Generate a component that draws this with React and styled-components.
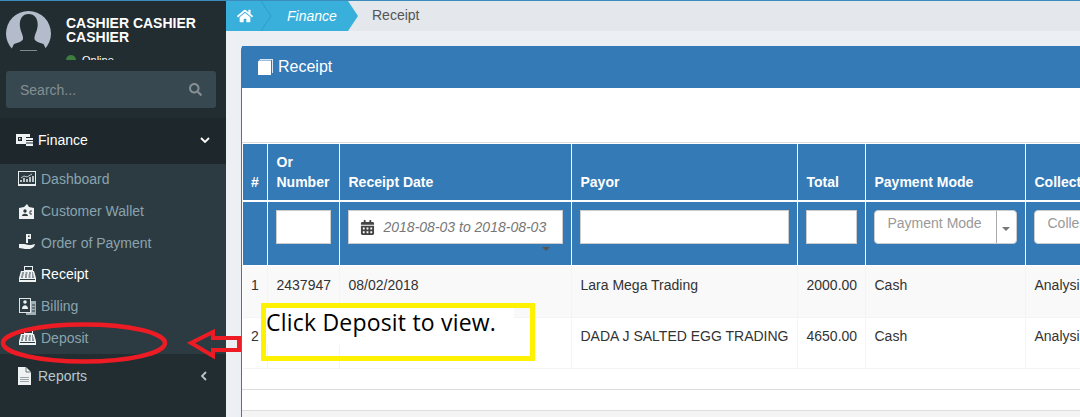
import React from 'react'
import styled, { createGlobalStyle } from 'styled-components'
import { FaHome, FaSearch, FaCalendarAlt } from 'react-icons/fa'

const GlobalStyle = createGlobalStyle`
    html, body {
        margin: 0;
        padding: 0;
        height: 417px;
        overflow: hidden;
        background: #ecf0f5;
        font-family: "Liberation Sans", Arial, sans-serif;
        font-size: 14px;
    }
    * { box-sizing: border-box; }
`

const DashboardIcon = () => (
    <svg width="18" height="16" viewBox="0 0 18 16" fill="none">
        <rect x="0.500" y="0.500" width="17" height="13" stroke="#e8eef0" />
        <rect y="13" width="18" height="2" fill="#e8eef0" />
        <path d="M3 11V9M6 11V7M9 11V8M12 11V6M15 11V5" stroke="#e8eef0" strokeWidth="1.500" />
        <path d="M3 7l3-2 3 1 5-3" stroke="#e8eef0" strokeWidth="0.800" />
    </svg>
)

const WalletIcon = () => (
    <svg width="18" height="16" viewBox="0 0 18 16">
        <path d="M1 5l5-1 3-3 2 3 5 1v11H1z" fill="#eef2f3" />
        <circle cx="7" cy="8" r="1.700" fill="#2c3b41" />
        <path d="M4 13c0-3 6-3 6 0z" fill="#2c3b41" />
        <path d="M14 8h-2v3h2" fill="none" stroke="#2c3b41" />
    </svg>
)

const PaymentIcon = () => (
    <svg width="18" height="17" viewBox="0 0 18 17">
        <path d="M8 0h5v5h-3v4H8z" fill="#eef2f3" />
        <rect x="10" y="1.500" width="1.500" height="1.500" fill="#2c3b41" />
        <path d="M1 10h5c2 0 3 1 5 1h2l4-1c0 2-2 4-5 5H7c-2 0-3-1-6-1z" fill="#eef2f3" />
    </svg>
)

const RegisterIcon = () => (
    <svg width="18" height="17" viewBox="0 0 18 17">
        <rect x="6.500" y="0.500" width="8" height="4" fill="none" stroke="#eef2f3" />
        <path d="M3 5h13l2 7v4H1v-4z" fill="#eef2f3" />
        <path d="M4 7h2M7.500 7h2M11 7h2M14 7h1M3.500 9h2M7 9h2M10.500 9h2M14 9h1.500M3 11h2M7 11h2M10.500 11h2M14 11h2M2 13.500h15" stroke="#2c3b41" />
    </svg>
)

const BillingIcon = () => (
    <svg width="18" height="17" viewBox="0 0 18 17">
        <rect x="8" y="3" width="10" height="14" fill="#9fb0b6" />
        <rect x="1.500" y="0.500" width="11" height="14" fill="#2c3b41" stroke="#dfe5e7" />
        <circle cx="7" cy="4" r="1.800" fill="#eef2f3" />
        <path d="M4 11c0-5 6-5 6 0z" fill="#eef2f3" />
        <path d="M14 7h3M14 10h3M14 13h3" stroke="#2c3b41" />
    </svg>
)

const FinanceIcon = () => (
    <svg width="17" height="12" viewBox="0 0 17 12">
        <path d="M0 0h14v3H10v7H0z" fill="#eef2f3" />
        <rect x="2" y="3" width="4" height="4" fill="#1e282c" />
        <rect x="3" y="4" width="1.500" height="1.500" fill="#eef2f3" />
        <path d="M10 4h7v8h-7z" fill="#eef2f3" />
        <path d="M10 6.500h7M10 9h7" stroke="#1e282c" />
    </svg>
)

const ReportsIcon = () => (
    <svg width="13" height="18" viewBox="0 0 13 18">
        <path d="M0 0h8l5 5v13H0z" fill="#eef2f3" />
        <path d="M8 0v5h5" fill="none" stroke="#222d32" strokeWidth="0.600" />
        <path d="M2 10.500h9M2 12.500h9M2 14.500h9" stroke="#9aa4a8" />
    </svg>
)

const BookIcon = () => (
    <svg width="15" height="16" viewBox="0 0 15 16">
        <path d="M2 0h13v14h-1V1H3C2 1 1 1.500 1 2.500z" fill="#d9e6f2" />
        <path d="M0 3c0-1 1-1.500 2-1.500h11V16H0z" fill="#fff" />
    </svg>
)

const Chevron = ({ d, w, h, color }) => (
    <svg width={w} height={h} viewBox={`0 0 ${w} ${h}`} fill="none">
        <path d={d} stroke={color} strokeWidth="1.800" />
    </svg>
)

const Page = styled.div`
    position: relative;
    display: flex;
    width: 1080px;
    height: 417px;
    overflow: hidden;
    border-top: 1px solid #3c8dbc;
`

const Sidebar = styled.aside`
    flex: 0 0 226px;
    display: flex;
    flex-direction: column;
    background: #222d32;
`

const UserPanel = styled.div`
    display: flex;
    flex: none;
    height: 59px;
    padding: 10px 0 0 6px;
    overflow: hidden;
`

const Avatar = styled.svg`
    flex: 0 0 45px;
    width: 45px;
    height: 45px;
`

const UserInfo = styled.div`
    margin-left: 15px;
    padding-top: 5px;
    color: #fff;
    font-weight: 700;
    font-size: 14px;
    line-height: 14px;
`

const UserName = styled.div`
    width: 150px;
`

const Status = styled.div`
    display: flex;
    align-items: center;
    gap: 6px;
    margin-top: 10px;
    font-weight: 400;
    font-size: 11px;
    line-height: 12px;
    &::before {
        content: '';
        width: 10px;
        height: 10px;
        border-radius: 50%;
        background: #3d7d3d;
    }
`

const SearchBox = styled.div`
    display: flex;
    flex: none;
    align-items: center;
    justify-content: space-between;
    height: 37px;
    margin: 11px 10px 10px 6px;
    padding: 0 14px;
    border-radius: 3px;
    background: #374850;
    color: #858f92;
    font-size: 14px;
`

const MenuHead = styled.div`
    display: flex;
    flex: none;
    align-items: center;
    height: ${p => p.$open ? '46px' : '44px'};
    padding: ${p => p.$open ? '0 16px 3px 16px' : '0 19px 0 18px'};
    background: ${p => p.$open ? '#1e282c' : 'transparent'};
    color: ${p => p.$open ? '#fff' : '#b8c7ce'};
    svg { flex: none; }
`

const MenuLabel = styled.span`
    flex: 1;
    margin-left: ${p => p.$gap}px;
`

const SubMenu = styled.div`
    display: flex;
    flex: none;
    flex-direction: column;
    height: 190px;
    background: #2c3b41;
`

const SubItem = styled.div`
    display: flex;
    align-items: center;
    gap: 5px;
    height: 31.800px;
    padding: 0 0 1px 18px;
    color: ${p => p.$active ? '#fff' : '#8aa4af'};
    svg { flex: none; }
`

const Main = styled.main`
    flex: 1;
    min-width: 0;
    overflow: hidden;
`

const Crumbs = styled.nav`
    display: flex;
    align-items: center;
    height: 30px;
    background: #e4e7eb;
    color: #555;
`

const HomeCrumb = styled.div`
    display: flex;
    align-items: center;
    width: 35px;
    height: 30px;
    padding-left: 11px;
    background: #39afdb;
    color: #fff;
`

const CrumbSeparator = styled.svg`
    flex: none;
    width: 10px;
    height: 30px;
    background: #39afdb;
`

const FinanceCrumb = styled.div`
    display: flex;
    align-items: center;
    width: 87px;
    height: 30px;
    padding-left: 16px;
    background: #39afdb;
    color: #fff;
    font-style: italic;
    clip-path: polygon(0 0, 77px 0, 100% 50%, 77px 100%, 0 100%);
`

const CurrentCrumb = styled.span`
    margin-left: 14px;
    margin-top: -2px;
    color: #555;
`

const Box = styled.section`
    width: 900px;
    margin: 15px 0 0 15px;
    border-left: 1px solid #337ab7;
    border-radius: 4px 0 0 0;
    background: #fff;
`

const BoxHeader = styled.header`
    display: flex;
    align-items: center;
    gap: 5px;
    height: 42px;
    padding-left: 16px;
    background: #337ab7;
    color: #fff;
    font-size: 16px;
`

const BoxToolbar = styled.div`
    height: 55px;
    margin-bottom: 1px;
    border-bottom: 1px solid #ddd;
`

const Table = styled.table`
    width: 833px;
    table-layout: fixed;
    border-collapse: collapse;
    border-spacing: 0;
    margin-left: 1px;
    font-size: 14px;
    color: #333;
`

const HeadCell = styled.th`
    height: ${p => p.$filter ? '64px' : '57px'};
    padding: 8px;
    padding-left: ${p => p.$filter ? '8px' : '9px'};
    border: 1px solid #fff;
    border-top: 0;
    border-bottom-width: ${p => p.$filter ? '1px' : '2px'};
    background: #337ab7;
    color: #fff;
    font-weight: 700;
    font-size: 14px;
    line-height: 20px;
    text-align: left;
    vertical-align: ${p => p.$filter ? 'top' : 'bottom'};
    &:first-child { border-left: 0; padding-left: 8px; }
`

const Cell = styled.td`
    height: ${p => p.$odd ? '52px' : '51px'};
    padding: ${p => p.$odd ? '9px' : '8px'} 8px 8px 9px;
    border: 1px solid #f4f4f4;
    line-height: 20px;
    vertical-align: top;
    white-space: nowrap;
    overflow: hidden;
    background: ${p => p.$odd ? '#f9f9f9' : '#fff'};
    &:first-child { border-left: 0; padding-left: 8px; }
`

const TextInput = styled.div`
    height: 34px;
    width: 100%;
    border: 1px solid #ccc;
    background: #fff;
`

const DateInput = styled(TextInput)`
    position: relative;
    display: flex;
    align-items: center;
    gap: 9px;
    padding-left: 11px;
    color: #777;
    font-weight: 400;
    font-style: italic;
    font-size: 14px;
    white-space: nowrap;
    svg { color: #444; flex: none; }
    &::after {
        content: '';
        position: absolute;
        right: 12px;
        bottom: -8px;
        border: 4px solid transparent;
        border-top-color: #555;
        border-bottom: 0;
    }
`

const SelectInput = styled.div`
    display: flex;
    height: 34px;
    border: 1px solid #ccc;
    border-radius: 4px;
    background: #fff;
    color: #999;
    font-weight: 400;
    font-size: 14px;
    line-height: 24px;
    overflow: hidden;
    white-space: nowrap;
`

const SelectText = styled.span`
    flex: 1;
    padding-left: 13px;
`

const SelectCaret = styled.span`
    display: flex;
    flex: 0 0 20px;
    align-items: center;
    justify-content: center;
    border-left: 1px solid #aaa;
    &::after {
        content: '';
        border: 4px solid transparent;
        border-top-color: #777;
        border-bottom: 0;
        margin-top: 3px;
    }
`

const BoxLine = styled.div`
    height: ${p => p.$h}px;
    border-bottom: 1px solid #ddd;
`

const BoxFooter = styled.div`
    height: 10px;
    background: #f4f4f4;
`

const Callout = styled.div`
    position: absolute;
    left: 261px;
    top: 302px;
    width: 274px;
    height: 58px;
    border: 5px solid #fff200;
`

const CalloutText = styled.div`
    width: 248px;
    height: 37px;
    background: #fff;
    color: #000;
    font-family: "Open Sans", sans-serif;
    font-size: 23px;
    letter-spacing: 0.2px;
    line-height: 28px;
    white-space: nowrap;
`

const Annotation = styled.svg`
    position: absolute;
    left: 0;
    top: -1px;
    width: 270px;
    height: 417px;
    pointer-events: none;
`

const columns = [
    { w: 24, label: '#' },
    { w: 72, label: <>Or<br />Number</> },
    { w: 232, label: 'Receipt Date' },
    { w: 226, label: 'Payor' },
    { w: 68, label: 'Total' },
    { w: 160, label: 'Payment Mode' },
    { w: 160, label: 'Collector' },
]

const rows = [
    ['1', '2437947', '08/02/2018', 'Lara Mega Trading', '2000.00', 'Cash', 'Analysis'],
    ['2', '', '', 'DADA J SALTED EGG TRADING', '4650.00', 'Cash', 'Analysis'],
]

const subItems = [
    { label: 'Dashboard', icon: <DashboardIcon /> },
    { label: 'Customer Wallet', icon: <WalletIcon /> },
    { label: 'Order of Payment', icon: <PaymentIcon /> },
    { label: 'Receipt', icon: <RegisterIcon />, active: true },
    { label: 'Billing', icon: <BillingIcon /> },
    { label: 'Deposit', icon: <RegisterIcon /> },
]

export default function App() {
    return (
        <>
            <GlobalStyle />
            <Page>
                <Sidebar>
                    <UserPanel>
                        <Avatar viewBox="0 0 45 45">
                            <defs>
                                <clipPath id="avatarClip"><rect width="45" height="38" /></clipPath>
                            </defs>
                            <g clipPath="url(#avatarClip)">
                                <circle cx="22.500" cy="22.500" r="22.500" fill="#b4bccb" />
                                <path d="M22.500 3c7 0 10 6 9 13-.6 5-3.500 8-3 12 .3 2 5 4 9 5l3 6H5l3-6c4-1 8.700-3 9-5 .5-4-2.400-7-3-12-1-7 2-13 8.500-13z" fill="#222d32" />
                            </g>
                            <rect x="14" y="39" width="17" height="1" fill="#7e8894" />
                        </Avatar>
                        <UserInfo>
                            <UserName>CASHIER CASHIER CASHIER</UserName>
                            <Status>Online</Status>
                        </UserInfo>
                    </UserPanel>
                    <SearchBox>
                        Search...
                        <FaSearch size={13} />
                    </SearchBox>
                    <MenuHead $open>
                        <FinanceIcon />
                        <MenuLabel $gap={5}>Finance</MenuLabel>
                        <Chevron w={10} h={6} d="M1 1l4 4 4-4" color="#fff" />
                    </MenuHead>
                    <SubMenu>
                        {subItems.map(item => (
                            <SubItem key={item.label} $active={item.active}>
                                {item.icon}
                                {item.label}
                            </SubItem>
                        ))}
                    </SubMenu>
                    <MenuHead>
                        <ReportsIcon />
                        <MenuLabel $gap={7}>Reports</MenuLabel>
                        <Chevron w={6} h={10} d="M5 1L1 5l4 4" color="#b8c7ce" />
                    </MenuHead>
                </Sidebar>
                <Main>
                    <Crumbs>
                        <HomeCrumb><FaHome size={16} /></HomeCrumb>
                        <CrumbSeparator viewBox="0 0 10 30" fill="none">
                            <path d="M0 0l10 15L0 30" stroke="#2e9bc6" />
                        </CrumbSeparator>
                        <FinanceCrumb>Finance</FinanceCrumb>
                        <CurrentCrumb>Receipt</CurrentCrumb>
                    </Crumbs>
                    <Box>
                        <BoxHeader><BookIcon />Receipt</BoxHeader>
                        <BoxToolbar />
                        <Table>
                            <colgroup>
                                {columns.map((c, i) => <col key={i} width={c.w} />)}
                            </colgroup>
                            <thead>
                                <tr>
                                    {columns.map((c, i) => <HeadCell key={i}>{c.label}</HeadCell>)}
                                </tr>
                                <tr>
                                    <HeadCell $filter />
                                    <HeadCell $filter><TextInput /></HeadCell>
                                    <HeadCell $filter>
                                        <DateInput>
                                            <FaCalendarAlt size={15} />
                                            2018-08-03 to 2018-08-03
                                        </DateInput>
                                    </HeadCell>
                                    <HeadCell $filter><TextInput /></HeadCell>
                                    <HeadCell $filter><TextInput /></HeadCell>
                                    <HeadCell $filter>
                                        <SelectInput>
                                            <SelectText>Payment Mode</SelectText>
                                            <SelectCaret />
                                        </SelectInput>
                                    </HeadCell>
                                    <HeadCell $filter>
                                        <SelectInput>
                                            <SelectText>Collector</SelectText>
                                        </SelectInput>
                                    </HeadCell>
                                </tr>
                            </thead>
                            <tbody>
                                {rows.map((row, r) => (
                                    <tr key={r}>
                                        {row.map((v, i) => <Cell key={i} $odd={r === 0}>{v}</Cell>)}
                                    </tr>
                                ))}
                            </tbody>
                        </Table>
                        <BoxLine $h={21} />
                        <BoxLine $h={21} />
                        <BoxFooter />
                    </Box>
                </Main>
                <Annotation viewBox="0 0 270 417">
                    <ellipse cx="84" cy="343" rx="81" ry="18.500" fill="none" stroke="#ed1c24" strokeWidth="4.500" />
                    <path d="M191 343l22-11v6h26v12h-26v6z" fill="none" stroke="#ed1c24" strokeWidth="4" />
                </Annotation>
                <Callout>
                    <CalloutText>Click Deposit to view.</CalloutText>
                </Callout>
            </Page>
        </>
    )
}
